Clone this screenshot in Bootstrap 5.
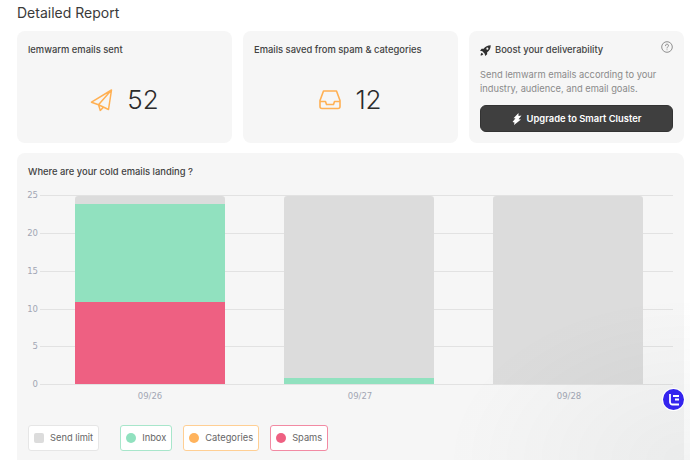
<!DOCTYPE html>
<html lang="en">
<head>
<meta charset="utf-8">
<title>Detailed Report</title>
<link href="https://cdn.jsdelivr.net/npm/bootstrap@5.3.0/dist/css/bootstrap.min.css" rel="stylesheet">
<style>
html,body{height:460px;overflow:hidden}
body{font-family:Inter,"Liberation Sans",sans-serif;background:#fff;color:#333;padding:0 6px 0 17px}
.page-title{font-size:14px;font-weight:400;line-height:17px;margin:4px 0 10px;color:#3a3a3a}
.panel{background:#f6f6f6;border-radius:8px;flex:1 1 0;min-width:0;padding:12px 11px 11px}
.stat-row{gap:11px;height:112px;margin-bottom:10px}
.panel-title{font-size:9.4px;font-weight:500;line-height:14px;color:#424242;margin:0}
.stat-body{height:72px;gap:14px;padding-top:14px}
.stat-num{font-size:26px;font-weight:300;line-height:30px;color:#2b2b2b}
.boost-text{font-size:9.3px;line-height:14px;color:#8a8a8a;margin:11px 0 9px}
.boost-btn{background:#3f3f3f;color:#fff;font-size:9.4px;font-weight:600;border:1px solid #333;border-radius:6px;height:27px;padding:1px 0 0;gap:5px}
.boost-btn:hover{background:#3f3f3f;color:#fff}
.help-icon{margin-top:-2px}
.chart-panel{height:330px;flex:none}
.chart-svg{display:block;margin:10px 0 0 -11px}
.chart-svg text{font-family:"DejaVu Sans",sans-serif;font-size:8.500px;fill:#a2a6b4}
.legend-row{margin-top:21px}
.legend-item{height:26px;border-radius:3px;background:#fff;border:1px solid #e6e6e6;font-size:9.300px;color:#666;padding:0 5px;gap:6px;line-height:1}
.swatch{width:10px;height:10px;border-radius:50%;flex:none}
.swatch-limit{background:#dcdcdc;border-radius:2px}
.swatch-inbox{background:#91e1bf}
.swatch-cat{background:#ffb35c}
.swatch-spam{background:#ee6082}
.legend-limit{margin-right:21px}
.legend-gap{gap:11px}
.border-inbox{border-color:#a8e6cb}
.border-cat{border-color:#ffcf94}
.border-spam{border-color:#f28aa3}
.corner-shade{position:fixed;right:0;bottom:0;width:240px;height:160px;pointer-events:none;background:radial-gradient(ellipse at 100% 100%,rgba(40,60,60,.055),rgba(40,60,60,0) 72%)}
.bubble{position:fixed;left:663px;top:389px;width:21px;height:21px;border-radius:50%;background:#3424ee;box-shadow:0 0 0 1px #fff}
</style>
</head>
<body>
<h1 class="page-title">Detailed Report</h1>
<div class="d-flex stat-row">
  <section class="panel">
    <h2 class="panel-title">lemwarm emails sent</h2>
    <div class="d-flex align-items-center justify-content-center stat-body">
      <svg width="23" height="23" viewBox="0 0 23 23" fill="none" stroke="#ffb053" stroke-width="1.500" stroke-linejoin="round" aria-hidden="true"><path d="M21.500 1 1.500 13.200l7 2.600L21.500 1 18.500 20.500 8.500 15.800l1.800 5.600 3.300-3.500"/></svg>
      <span class="stat-num">52</span>
    </div>
  </section>
  <section class="panel">
    <h2 class="panel-title">Emails saved from spam &amp; categories</h2>
    <div class="d-flex align-items-center justify-content-center stat-body">
      <svg width="22" height="20" viewBox="0 0 22 20" fill="none" stroke="#ffb053" stroke-width="1.600" stroke-linejoin="round" aria-hidden="true"><path d="M4.500 1h13l3.500 9.500v6a2 2 0 0 1-2 2H3a2 2 0 0 1-2-2v-6zM1.200 11.500H6.500l1 3h7l1-3h5.300"/></svg>
      <span class="stat-num">12</span>
    </div>
  </section>
  <section class="panel">
    <div class="d-flex justify-content-between align-items-start">
      <h2 class="panel-title d-flex align-items-center gap-1">
        <svg width="11" height="11" viewBox="0 0 16 16" fill="#2f2f2f" aria-hidden="true"><path d="M15.600.4C11 .4 7.600 2.400 5.300 5.600H2.400L0 8.400l3.400.8 3.400 3.400.8 3.400 2.800-2.400v-2.900c3.200-2.300 5.200-5.700 5.200-10.300ZM10.700 6.800a1.500 1.500 0 1 1 0-3 1.500 1.500 0 0 1 0 3ZM2.600 11.200C1.400 12 .9 13.700.8 15.200c1.500-.1 3.200-.6 4-1.800z"/></svg>
        Boost your deliverability
      </h2>
      <svg class="help-icon" width="12" height="12" viewBox="0 0 12 12" fill="none" stroke="#8f8f8f" aria-hidden="true"><circle cx="6" cy="6" r="5.300"/><path d="M4.500 4.700A1.500 1.500 0 1 1 6.600 6c-.4.2-.6.5-.6 1" stroke-linecap="round"/><circle cx="6" cy="8.800" r=".5" fill="#8f8f8f" stroke="none"/></svg>
    </div>
    <p class="boost-text">Send lemwarm emails according to your industry, audience, and email goals.</p>
    <button type="button" class="btn boost-btn w-100 d-flex align-items-center justify-content-center">
      <svg width="10" height="12" viewBox="0 0 10 12" fill="#fff" aria-hidden="true"><path d="M6.500 0 1.500 5.200h2L0.500 9l2 .4L2 12l7-5.600-2.500-.2L9.500 2.500 6.500 3z"/></svg>
      Upgrade to Smart Cluster
    </button>
  </section>
</div>
<section class="panel chart-panel">
  <h2 class="panel-title">Where are your cold emails landing ?</h2>
  <svg class="chart-svg" width="667" height="215" viewBox="17 189 667 215" role="img" aria-label="Stacked bar chart">
    <g stroke="#e2e2e2" stroke-width="1">
      <path d="M40 195.500H673M40 233.500H673M40 271.500H673M40 309.500H673M40 346.500H673M40 384.500H673"/>
    </g>
    <g text-anchor="end">
      <text x="38" y="198">25</text><text x="38" y="236">20</text><text x="38" y="274">15</text><text x="38" y="312">10</text><text x="38" y="349">5</text><text x="38" y="387">0</text>
    </g>
    <path d="M75 204V199a3 3 0 0 1 3-3H222a3 3 0 0 1 3 3V204Z" fill="#dcdcdc"/>
    <rect x="75" y="204" width="150" height="98" fill="#91e1bf"/>
    <rect x="75" y="302" width="150" height="82" fill="#ee6082"/>
    <path d="M284 384V199a3 3 0 0 1 3-3H431a3 3 0 0 1 3 3V384Z" fill="#dcdcdc"/>
    <rect x="284" y="378" width="150" height="6" fill="#91e1bf"/>
    <path d="M493 384V199a3 3 0 0 1 3-3H640a3 3 0 0 1 3 3V384Z" fill="#dcdcdc"/>
    <g text-anchor="middle">
      <text x="150" y="399">09/26</text><text x="360" y="399">09/27</text><text x="569" y="399">09/28</text>
    </g>
  </svg>
  <div class="d-flex legend-row">
    <div class="d-flex align-items-center legend-item legend-limit"><span class="swatch swatch-limit"></span>Send limit</div>
    <div class="d-flex legend-gap">
      <div class="d-flex align-items-center legend-item border-inbox"><span class="swatch swatch-inbox"></span>Inbox</div>
      <div class="d-flex align-items-center legend-item border-cat"><span class="swatch swatch-cat"></span>Categories</div>
      <div class="d-flex align-items-center legend-item border-spam"><span class="swatch swatch-spam"></span>Spams</div>
    </div>
  </div>
</section>
<div class="corner-shade"></div>
<div class="bubble d-flex align-items-center justify-content-center">
  <svg width="12" height="12" viewBox="0 0 12 12" fill="none" stroke="#fff" stroke-width="1.800" aria-hidden="true"><path d="M2 0v8a2.500 2.500 0 0 0 2.500 2.500H11"/><path d="M5 2h6M7 5.500h4"/></svg>
</div>
</body>
</html>
